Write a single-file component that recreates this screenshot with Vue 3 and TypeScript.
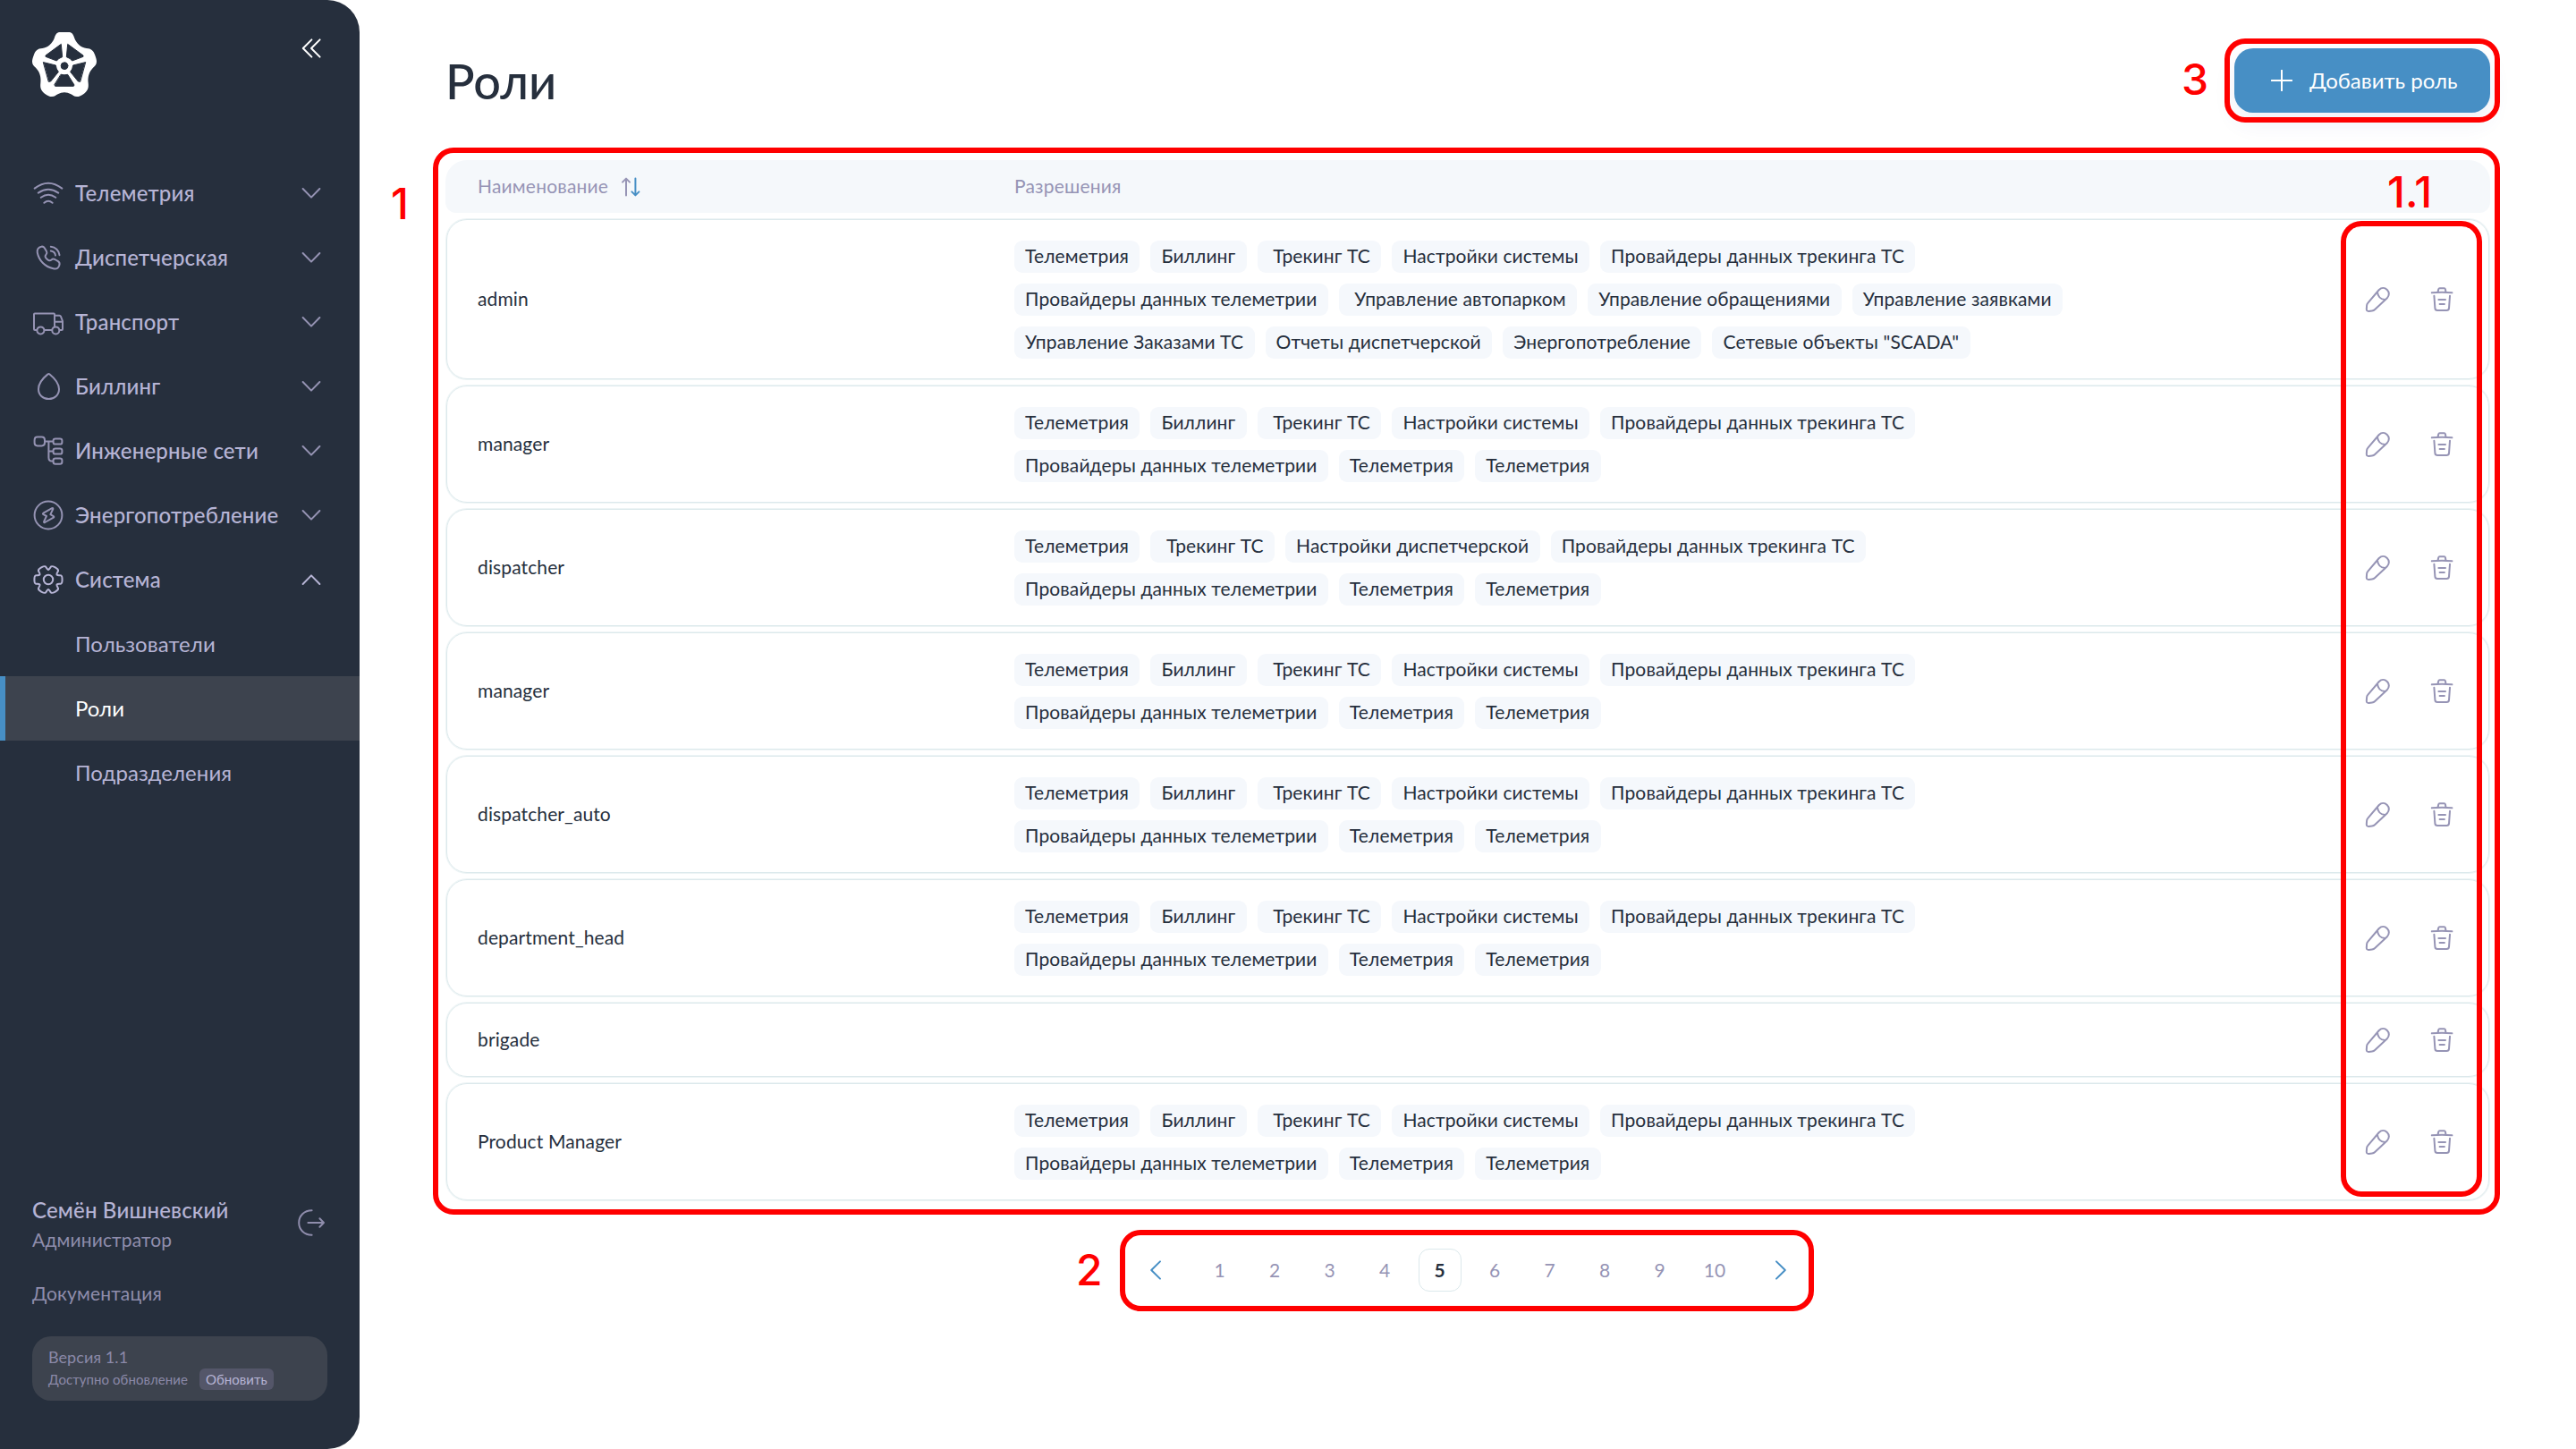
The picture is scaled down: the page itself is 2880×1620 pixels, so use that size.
<script setup lang="ts">
interface MenuItem { label: string; icon: string; open?: boolean }
interface Role { name: string; permissions: string[] }

/* Six rounded teeth around the centre of a 36x36 icon box. */
function gearPath(): string {
  const rot = (x: number, y: number, deg: number) => {
    const a = (deg * Math.PI) / 180
    return `${(18 + x * Math.cos(a) - y * Math.sin(a)).toFixed(2)} ${(18 + x * Math.sin(a) + y * Math.cos(a)).toFixed(2)}`
  }
  let d = `M${rot(9.5, -5.5, 0)}`
  for (let k = 0; k < 6; k++) {
    const p = (x: number, y: number) => rot(x, y, k * 60)
    d += `C${p(11, -4.2)} ${p(12.6, -5.2)} ${p(14.2, -4.6)}C${p(15.6, -4)} ${p(15.6, -2)} ${p(15.6, 0)}`
    d += `C${p(15.6, 2)} ${p(15.6, 4)} ${p(14.2, 4.6)}C${p(12.6, 5.2)} ${p(11, 4.2)} ${p(9.5, 5.5)}`
  }
  return d + 'Z'
}

const icons: Record<string, string> = {
  wifi: 'M2.7 12.6Q18 1 33.3 12.6M6.8 17.6Q18 9.8 29.2 17.6M9.8 22.8Q18 16.8 26.2 22.8M13.4 28.8Q18 24.8 22.6 28.8',
  phone: 'M10.2 5.7C11.8 5.4 13 6 13.8 7.2L16 10.9C16.8 12.4 16.5 13.6 15.5 14.7C14.4 15.9 14.3 17 15.2 18.3C16 19.6 17 20.4 18.4 21.1C19.7 21.6 20.5 21.4 21.5 20.5C22.6 19.5 24 19.3 25.3 20L29 22.2C30.5 23.2 31 25 30.2 27C29.2 29.8 26.5 31 23.5 30.3C14.5 28.4 7.5 21.4 5.8 12.5C5.2 9.3 6.8 6.2 10.2 5.7ZM20.8 5.8C26 6.2 30 10 30.5 15.2M20.8 10.6C23.8 11 25.6 12.8 26 15.6',
  truck: 'M5.3 27H3Q2 27 2 26V9.5Q2 8.6 2.9 8.6H24.1Q25 8.6 25 9.5V23.2M13.4 27H22.3M25 10.8H30.3Q31.5 10.8 32 11.8L34 17V26Q34 27 33 27H30.4M25.5 17.8H34M13.4 27.4A4 4 0 1 1 5.4 27.4A4 4 0 1 1 13.4 27.4ZM30.3 27.4A4 4 0 1 1 22.3 27.4A4 4 0 1 1 30.3 27.4Z',
  drop: 'M17.4 4.4Q18.5 3.5 19.6 4.4C25 8.8 30 15 30 21C30 27.5 25 32 18.5 32C12 32 7 27.5 7 21C7 15 12 8.8 17.4 4.4Z',
  network: 'M5.8 2.6H10.6Q14 2.6 14 6V9Q14 12.4 10.6 12.4H5.8Q2.6 12.4 2.6 9V6Q2.6 2.6 5.8 2.6ZM26 4.4H31Q33.4 4.4 33.4 6.6V8.4Q33.4 10.6 31 10.6H26Q23.6 10.6 23.6 8.4V6.6Q23.6 4.4 26 4.4ZM26 15.4H31Q33.4 15.4 33.4 17.6V19.4Q33.4 21.6 31 21.6H26Q23.6 21.6 23.6 19.4V17.6Q23.6 15.4 26 15.4ZM26 26.4H31Q33.4 26.4 33.4 28.6V30.6Q33.4 32.8 31 32.8H26Q23.6 32.8 23.6 30.6V28.6Q23.6 26.4 26 26.4ZM14 7.5H23.6M18.4 7.5V25.5Q18.4 29.6 22 29.6H23.6M18.4 18.5H23.6',
  energy: 'M33.4 18A15.4 15.4 0 1 1 2.6 18A15.4 15.4 0 1 1 33.4 18ZM22.2 10.2L12.4 15.7Q11.3 16.5 12.5 17.2L16 19L13.1 25.2Q13 26.6 14.2 26L23.8 20.6Q24.9 19.8 23.7 19.1L20.4 17.1L23.3 11Q23.4 9.6 22.2 10.2Z',
  gear: gearPath() + 'M23.2 18A5.2 5.2 0 1 1 12.8 18A5.2 5.2 0 1 1 23.2 18Z',
  pencil: 'M7.2 21.8Q6.2 22.9 6.1 24.5L5.8 28.6Q5.8 31 8.2 30.9L12 30.5Q13.9 30.3 15.2 29L28.8 16.2C31.5 13.5 31.5 9.6 28.8 7C26.2 4.4 22.5 4.4 19.8 7ZM18 9.2C18.2 14 21.4 17.6 26.6 18',
  trash: 'M6.8 10.3Q18 9 29.4 10.3M13.6 9L14.3 6.2Q14.6 5.2 15.6 5.2H20.6Q21.6 5.2 21.9 6.2L22.4 9M9.4 13.8L10.4 27.6Q10.6 30 13 30H23.4Q25.8 30 26 27.6L27 13.8M14.4 18H22M15.6 23H20.9',
  logout: 'M18.6 4.3C10 4.3 4.2 10.4 4.2 18C4.2 25.6 10 31.7 18.6 31.7M14.4 18H32M27.4 13.3L32 18L27.4 22.7',
}

const menu: MenuItem[] = [
  { label: 'Телеметрия', icon: 'wifi' },
  { label: 'Диспетчерская', icon: 'phone' },
  { label: 'Транспорт', icon: 'truck' },
  { label: 'Биллинг', icon: 'drop' },
  { label: 'Инженерные сети', icon: 'network' },
  { label: 'Энергопотребление', icon: 'energy' },
  { label: 'Система', icon: 'gear', open: true },
]
const submenu = ['Пользователи', 'Роли', 'Подразделения']
const activeItem = 'Роли'

const common = [
  'Телеметрия', 'Биллинг', ' Трекинг ТС', 'Настройки системы', 'Провайдеры данных трекинга ТС',
  'Провайдеры данных телеметрии', 'Телеметрия', 'Телеметрия',
]
const roles: Role[] = [
  {
    name: 'admin',
    permissions: [
      'Телеметрия', 'Биллинг', ' Трекинг ТС', 'Настройки системы', 'Провайдеры данных трекинга ТС',
      'Провайдеры данных телеметрии', ' Управление автопарком', 'Управление обращениями', 'Управление заявками',
      'Управление Заказами ТС', 'Отчеты диспетчерской', 'Энергопотребление', 'Сетевые объекты "SCADA"',
    ],
  },
  { name: 'manager', permissions: common },
  {
    name: 'dispatcher',
    permissions: [
      'Телеметрия', ' Трекинг ТС', 'Настройки диспетчерской', 'Провайдеры данных трекинга ТС',
      'Провайдеры данных телеметрии', 'Телеметрия', 'Телеметрия',
    ],
  },
  { name: 'manager', permissions: common },
  { name: 'dispatcher_auto', permissions: common },
  { name: 'department_head', permissions: common },
  { name: 'brigade', permissions: [] },
  { name: 'Product Manager', permissions: common },
]
const currentPage = 5
</script>

<template>
  <div class="app">
    <aside class="sidebar">
      <div class="brand">
        <svg class="logo" viewBox="0 0 216 216">
          <path fill="#fff" d="M94 0H122C134 0 138 8 141 18C148 38 164 52 182 54C198 55 205 62 210 75C214 86 216 92 216 98C216 108 211 112 204 119C190 134 186 150 188 170C190 188 186 196 174 206C164 213 158 216 150 216C140 216 136 211 130 208C116 200 100 200 86 208C80 211 76 216 66 216C58 216 52 213 42 206C30 196 26 188 28 170C30 150 26 134 12 119C5 112 0 108 0 98C0 92 2 86 6 75C11 62 18 55 34 54C52 52 68 38 75 18C78 8 82 0 94 0Z" />
          <g class="holes">
            <path d="M97 41L101 83Q88 87 82 96L45 82V78L94 42Z" />
            <path d="M119 41L115 83Q128 87 134 96L171 82V78L122 42Z" />
            <path d="M38 101L79 111Q80 124 88 133L62 165L56 166Z" />
            <path d="M178 101L137 111Q136 124 128 133L154 165L160 166Z" />
            <path d="M97 142Q108 145 119 142L141 177L139 181H77L75 177Z" />
            <circle cx="108" cy="113" r="11.5" />
          </g>
        </svg>
        <svg class="collapse" viewBox="0 0 24 24"><path d="M12.4 2.4L2.8 12L12.4 21.6M21.6 2.4L12 12L21.6 21.6" /></svg>
      </div>

      <nav class="menu">
        <div v-for="item in menu" :key="item.label" class="menu-item" :class="{ open: item.open }">
          <svg class="icon" viewBox="0 0 36 36"><path :d="icons[item.icon]" /></svg>
          <span class="menu-label">{{ item.label }}</span>
          <svg class="chevron" viewBox="0 0 24 24"><path :d="item.open ? 'M2.6 17L12 7.4L21.4 17' : 'M2.6 7L12 16.6L21.4 7'" /></svg>
        </div>
        <div v-for="label in submenu" :key="label" class="sub-item" :class="{ active: label === activeItem }">{{ label }}</div>
      </nav>

      <div class="user">
        <div>
          <div class="user-name">Семён Вишневский</div>
          <div class="muted">Администратор</div>
        </div>
        <svg class="icon" viewBox="0 0 36 36"><path :d="icons.logout" /></svg>
      </div>
      <div class="muted docs">Документация</div>
      <div class="version">
        <div class="version-name">Версия 1.1</div>
        <div class="version-row">
          <span>Доступно обновление</span>
          <span class="update">Обновить</span>
        </div>
      </div>
    </aside>

    <main class="main">
      <header class="page-head">
        <h1>Роли</h1>
        <button class="add">
          <svg viewBox="0 0 24 24"><path d="M12 .8V23.2M.8 12H23.2" /></svg>
          <span>Добавить роль</span>
        </button>
      </header>

      <section class="table">
        <div class="thead">
          <div class="col-name">
            Наименование
            <svg class="sort" viewBox="0 0 24 24">
              <path class="asc" d="M7 21.6V3M3 6.6L7 2.6L11 6.6" />
              <path class="desc" d="M17.4 2.4V21M13.4 17.4L17.4 21.4L21.4 17.4" />
            </svg>
          </div>
          <div>Разрешения</div>
        </div>
        <div v-for="(role, i) in roles" :key="i" class="row">
          <div class="col-name">{{ role.name }}</div>
          <div class="chips">
            <span v-for="(p, j) in role.permissions" :key="j" class="chip">{{ p }}</span>
          </div>
          <div class="actions">
            <svg class="icon" viewBox="0 0 36 36"><path :d="icons.pencil" /></svg>
            <svg class="icon" viewBox="0 0 36 36"><path :d="icons.trash" /></svg>
          </div>
        </div>
      </section>

      <div class="pagination">
        <svg class="arrow" viewBox="0 0 24 24"><path d="M17 2.4L7.2 12L17 21.6" /></svg>
        <div class="pages">
          <span v-for="n in 10" :key="n" class="page" :class="{ current: n === currentPage }">{{ n }}</span>
        </div>
        <svg class="arrow" viewBox="0 0 24 24"><path d="M7 2.4L16.8 12L7 21.6" /></svg>
      </div>
    </main>

    <div class="mark mark-table"></div>
    <div class="mark mark-actions"></div>
    <div class="mark mark-pages"></div>
    <div class="mark mark-add"></div>
    <span class="mark-label label-1">1</span>
    <span class="mark-label label-11">1.1</span>
    <span class="mark-label label-2">2</span>
    <span class="mark-label label-3">3</span>
  </div>
</template>

<style>
body { margin: 0; background: #fff; }
</style>

<style scoped>
.app {
  position: relative;
  display: flex;
  width: 2880px;
  height: 1620px;
  overflow: hidden;
  background: #fff;
  color: #262f3d;
  font-family: Lato, sans-serif;
  font-size: 21px;
  letter-spacing: 0.12px;
}
svg { display: block; flex: none; fill: none; stroke: currentColor; stroke-width: 2; stroke-linecap: round; stroke-linejoin: round; }
.icon { width: 36px; height: 36px; }

.sidebar {
  box-sizing: border-box;
  display: flex;
  flex-direction: column;
  flex: none;
  width: 402px;
  height: 1620px;
  padding: 36px 0 54px;
  border-radius: 0 36px 36px 0;
  background: #262f3d;
  color: #b6b4d5;
}
.brand { display: flex; justify-content: space-between; height: 144px; padding: 0 42px 0 36px; }
.logo { width: 72px; height: 72px; stroke: none; }
.holes { fill: #262f3d; stroke: #262f3d; stroke-width: 3; }
.collapse { width: 24px; height: 24px; margin-top: 6px; color: #fff; }
.menu { flex: 1; }
.menu-item { display: flex; align-items: center; height: 72px; padding: 0 42px 0 36px; color: #9593b3; font-size: 24px; font-weight: 500; letter-spacing: 0.17px; }
.menu-item.open { color: #b6b4d5; }
.menu-label { flex: 1; margin-left: 12px; padding-bottom: 2px; color: #b6b4d5; }
.chevron { width: 24px; height: 24px; }
.sub-item { box-sizing: border-box; height: 72px; padding-left: 84px; line-height: 72px; font-size: 24px; letter-spacing: 0.05px; }
.sub-item.active { padding-left: 78px; border-left: 6px solid #478fc5; background: #3d434e; color: #fff; }
.user { display: flex; justify-content: space-between; align-items: center; height: 66px; padding: 0 36px; margin-bottom: 31px; }
.user-name { padding-top: 2px; line-height: 36px; font-size: 24px; font-weight: 500; letter-spacing: 0.18px; }
.user .icon, .muted { color: #8f8dac; }
.muted { line-height: 30px; }
.docs { margin: 0 36px 33px; letter-spacing: 0.14px; }
.version { box-sizing: border-box; height: 72px; margin: 0 36px; padding: 11px 18px; border-radius: 21px; background: #3d434e; color: #8b89a8; letter-spacing: 0.05px; }
.version-name { line-height: 25px; font-size: 18px; }
.version-row { display: flex; align-items: center; gap: 13px; line-height: 24px; font-size: 15px; }
.update { padding: 0 7px; border-radius: 6px; background: #545669; color: #b6b4d5; }

.main { display: flex; flex-direction: column; width: 2286px; padding: 54px 0 0 96px; }
.page-head { display: flex; justify-content: space-between; align-items: center; height: 72px; margin-bottom: 53px; }
h1 { margin: 0; padding-top: 2px; font-size: 54px; font-weight: 500; line-height: 72px; letter-spacing: 0; }
.add {
  box-sizing: border-box;
  display: flex;
  align-items: center;
  gap: 19px;
  width: 286px;
  height: 72px;
  padding: 0 0 0 41px;
  border: 0;
  border-radius: 21px;
  background: #478fc5;
  box-shadow: 0 12px 24px rgba(60, 70, 150, 0.08);
  color: #fff;
  font: 400 24px Lato, sans-serif;
}
.add svg { width: 24px; height: 24px; }
.add span { padding-bottom: 1px; }

.table { display: flex; flex-direction: column; gap: 7px; }
.thead { display: flex; align-items: center; height: 59px; padding-left: 36px; border-radius: 24px 24px 12px 12px; background: #f5f8fb; color: #9694b5; line-height: 57px; letter-spacing: 0.2px; }
.thead > div { height: 59px; }
.thead .col-name { display: flex; gap: 13px; }
.sort { width: 24px; height: 24px; margin-top: 18px; }
.desc { stroke: #478fc5; }
.col-name { width: 600px; flex: none; }
.row {
  box-sizing: border-box;
  display: flex;
  align-items: center;
  min-height: 83px;
  margin: 0 1px;
  padding: 22.5px 34px;
  border: 1px solid #dce9ec;
  border-radius: 23px;
  box-shadow: 0 0 0 1px rgba(220, 233, 236, 0.5);
}
.row .col-name { padding-bottom: 2px; }
.chips { display: flex; flex-wrap: wrap; gap: 12px; width: 1240px; }
.chip { height: 36px; padding: 0 12.4px 0 12px; border-radius: 9px; background: #f5f8fc; line-height: 34px; white-space: pre; }
.actions { display: flex; gap: 36px; height: 36px; margin-left: auto; color: #9694b5; }

.pagination { display: flex; justify-content: center; align-items: center; height: 48px; margin-top: 54px; color: #9694b5; letter-spacing: 0; }
.pages { display: flex; gap: 13.5px; margin: 0 37.5px 0 36px; }
.page { box-sizing: border-box; width: 48px; height: 48px; line-height: 48px; text-align: center; }
.page.current { border: 1.5px solid #dce9ec; border-radius: 12px; color: #262f3d; font-weight: 700; line-height: 46px; }
.arrow { width: 24px; height: 24px; color: #478fc5; }

/* Numbered callouts drawn over the screen. */
.mark { position: absolute; box-sizing: border-box; border: 6px solid #f00; border-radius: 23px; }
.mark-table { left: 484px; top: 165px; width: 2311px; height: 1193px; }
.mark-actions { left: 2617px; top: 247px; width: 158px; height: 1091px; }
.mark-pages { left: 1252px; top: 1375px; width: 776px; height: 91px; }
.mark-add { left: 2487px; top: 43px; width: 308px; height: 94px; }
.mark-label { position: absolute; color: #f00; font: 450 48px/48px Inter, sans-serif; letter-spacing: 0; }
.label-1 { left: 437px; top: 204px; }
.label-11 { left: 2669px; top: 191px; }
.label-2 { left: 1203px; top: 1396px; }
.label-3 { left: 2439px; top: 65px; }
</style>
